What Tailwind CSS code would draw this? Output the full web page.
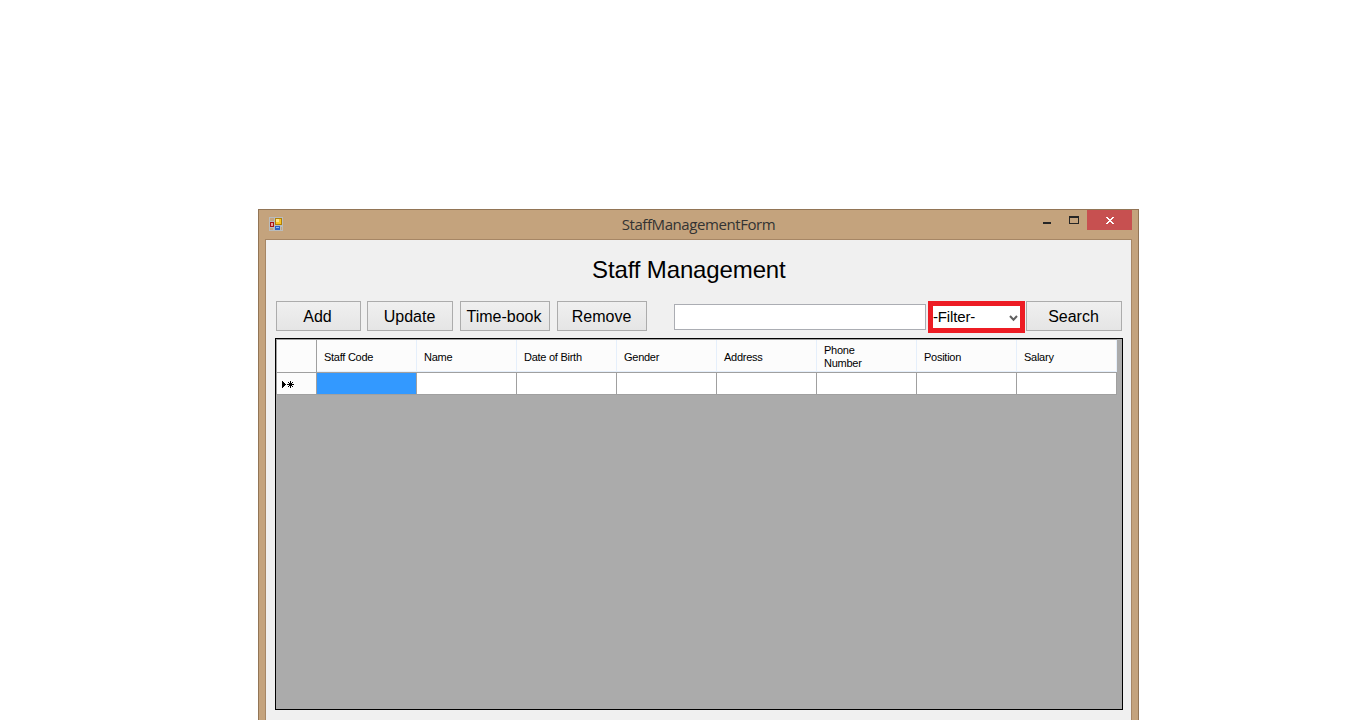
<!DOCTYPE html>
<html lang="en">
<head>
<meta charset="utf-8">
<title>StaffManagementForm</title>
<script src="https://cdn.jsdelivr.net/npm/@tailwindcss/browser@4"></script>
</head>
<body class="h-[720px] overflow-hidden bg-white pl-[258px] pt-[209px] font-['Liberation_Sans',Arial,sans-serif] text-black">
<main class="flex h-[511px] w-[881px] flex-col border border-b-0 border-[#927556] bg-[#c4a37d] px-[6px]">
  <header class="relative flex h-[29px] shrink-0 items-start justify-center">
    <svg class="absolute left-1 top-[7px]" width="14" height="14" viewBox="0 0 14 14" shape-rendering="crispEdges">
      <path fill="#b9bcbd" d="M0 0h14v14H0z"/>
      <path fill="#c4a37d" d="M1 1h4v3H1zM1 11h3v2H1zM12 10h1v3h-1z"/>
      <path fill="#b07f08" d="M6 1h7v7H6z"/><path fill="#f8c522" d="M7 2h5v5H7z"/><path fill="#ffe488" d="M7 2h3v3H7z"/>
      <path fill="#a81414" d="M1 5h4v5H1z"/><path fill="#e9a09a" d="M2 6h2v3H2z"/>
      <path fill="#2c62c4" d="M6 9h5v4H6z"/><path fill="#8cb9f5" d="M7 10h3v1H7z"/>
    </svg>
    <h1 class="mt-1 whitespace-nowrap font-['Open_Sans',sans-serif] text-[15px] leading-5 tracking-[-0.42px] text-[#333]">StaffManagementForm</h1>
    <div class="absolute right-0 top-0 flex">
      <svg width="54" height="20" viewBox="0 0 54 20" shape-rendering="crispEdges" fill="#262626"><path d="M10 12h8v2h-8z"/><path fill-rule="evenodd" d="M36 6h10v8H36zM37 8v5h8V8z"/></svg>
      <div class="flex h-5 w-[45px] bg-[#c75050]">
        <svg width="45" height="20" viewBox="0 0 45 20" shape-rendering="crispEdges" fill="white"><path d="M19 7h2v1h1v1h2V8h1V7h2v1h-1v1h-1v1h-1v1h1v1h1v1h1v1h-2v-1h-1v-1h-2v1h-1v1h-2v-1h1v-1h1v-1h1v-1h-1V9h-1V8h-1z"/></svg>
      </div>
    </div>
  </header>
  <section class="flex grow flex-col border border-b-0 border-[#a68665] bg-[#f0f0f0] pl-[9px] pr-2">
    <h2 class="mt-4 h-7 whitespace-nowrap pl-[317px] text-2xl leading-7 tracking-[-0.13px]">Staff Management</h2>
    <div class="mt-[17px] flex h-[32px] items-start pl-px text-base">
      <button class="h-[30px] w-[85px] border border-[#acacac] bg-linear-to-b from-[#f0f0f0] to-[#e5e5e5] pr-[2px] pt-px leading-7">Add</button>
      <button class="ml-[6px] h-[30px] w-[86px] border border-[#acacac] bg-linear-to-b from-[#f0f0f0] to-[#e5e5e5] pr-px pt-px leading-7">Update</button>
      <button class="ml-[7px] h-[30px] w-[90px] border border-[#acacac] bg-linear-to-b from-[#f0f0f0] to-[#e5e5e5] pr-[2px] pt-px leading-7">Time-book</button>
      <button class="ml-[7px] h-[30px] w-[90px] border border-[#acacac] bg-linear-to-b from-[#f0f0f0] to-[#e5e5e5] pr-px pt-px leading-7">Remove</button>
      <input class="ml-[27px] mt-[3px] h-[26px] w-[252px] border border-[#abadb3] bg-white" aria-label="Search">
      <div class="ml-[2px] flex h-8 w-[97px] items-center justify-between border-5 border-[#ed1c24] bg-white pr-[2px]">
        <span class="text-[15px] leading-5 tracking-[-0.15px]">-Filter-</span>
        <svg class="mt-[3px]" width="9" height="7" viewBox="0 0 9 7"><path d="M1 1l3.5 3.8L8 1" fill="none" stroke="#606060" stroke-width="2"/></svg>
      </div>
      <button class="ml-px h-[30px] w-[96px] border border-[#acacac] bg-linear-to-b from-[#f0f0f0] to-[#e5e5e5] pr-px pt-px leading-7">Search</button>
    </div>
    <div class="mt-[5px] h-[372px] w-[848px] shrink-0 border border-black bg-[#ababab]">
      <div class="w-[841px] border-l border-t border-[#a0a0a0] text-[11px] leading-[13px] tracking-[-0.26px]">
        <div class="flex h-[33px] border-b border-[#a0a0a0] bg-[#fcfcfc]">
          <div class="w-10 border-r border-[#a0a0a0]"></div>
          <div class="flex w-[100px] items-center border-r border-b border-[#e5effb] pl-[7px] pt-1">Staff Code</div>
          <div class="flex w-[100px] items-center border-r border-b border-[#e5effb] pl-[7px] pt-1">Name</div>
          <div class="flex w-[100px] items-center border-r border-b border-[#e5effb] pl-[7px] pt-1">Date of Birth</div>
          <div class="flex w-[100px] items-center border-r border-b border-[#e5effb] pl-[7px] pt-1">Gender</div>
          <div class="flex w-[100px] items-center border-r border-b border-[#e5effb] pl-[7px] pt-1">Address</div>
          <div class="flex w-[100px] items-center border-r border-b border-[#e5effb] pl-[7px] pt-[2px]">Phone<br>Number</div>
          <div class="flex w-[100px] items-center border-r border-b border-[#e5effb] pl-[7px] pt-1">Position</div>
          <div class="flex w-[100px] items-center border-r border-b border-[#e5effb] pl-[7px] pt-1">Salary</div>
        </div>
        <div class="flex h-[22px]">
          <div class="w-10 border-r border-b border-[#a0a0a0] bg-[#fcfcfc] pl-[5px] pt-2">
            <svg width="13" height="7" viewBox="0 0 13 7" shape-rendering="crispEdges"><path d="M0 0h1v1h1v1h1v1h1v1H3v1H2v1H1v1H0zM8 0h1v7H8zM5 3h7v1H5zM6 1h1v1H6zM7 2h3v3H7zM10 1h1v1h-1zM6 5h1v1H6zM10 5h1v1h-1z"/></svg>
          </div>
          <div class="w-[100px] border-r border-b border-[#a0a0a0] bg-[#3399ff]"></div>
          <div class="w-[100px] border-r border-b border-[#a0a0a0] bg-white"></div>
          <div class="w-[100px] border-r border-b border-[#a0a0a0] bg-white"></div>
          <div class="w-[100px] border-r border-b border-[#a0a0a0] bg-white"></div>
          <div class="w-[100px] border-r border-b border-[#a0a0a0] bg-white"></div>
          <div class="w-[100px] border-r border-b border-[#a0a0a0] bg-white"></div>
          <div class="w-[100px] border-r border-b border-[#a0a0a0] bg-white"></div>
          <div class="w-[100px] border-r border-b border-[#a0a0a0] bg-white"></div>
        </div>
      </div>
    </div>
  </section>
</main>
</body>
</html>
